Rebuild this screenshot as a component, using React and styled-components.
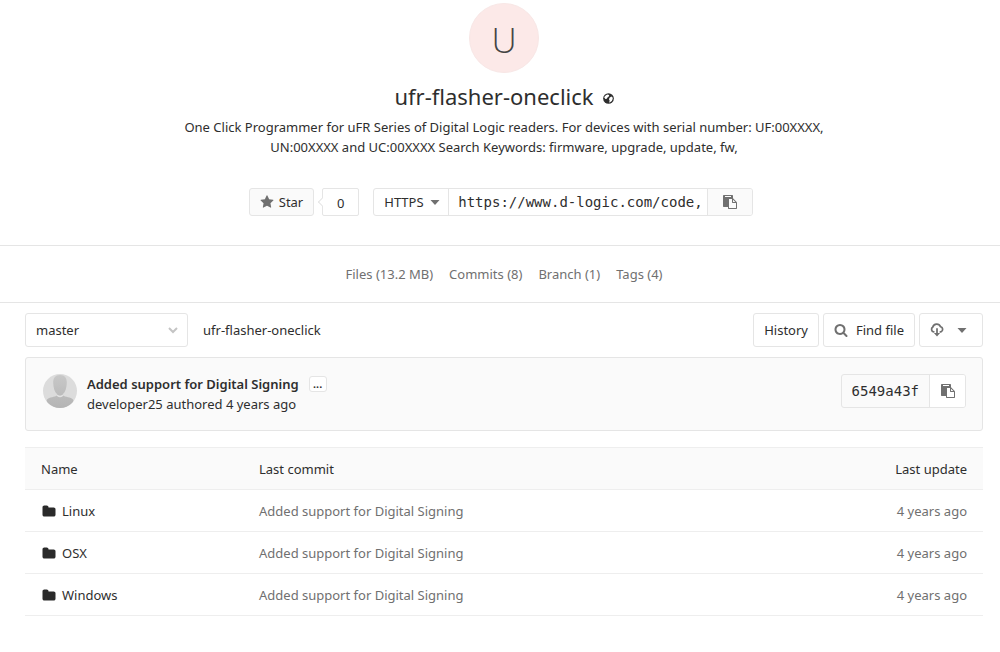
import React from "react";
import styled, { createGlobalStyle } from "styled-components";

const GlobalStyle = createGlobalStyle`
  *, *::before, *::after { box-sizing: border-box; }
  body {
    margin: 0;
    background: #fff;
    color: #2e2e2e;
    font-family: "Noto Sans", "Open Sans", sans-serif;
    font-size: 13px;
    line-height: 20px;
  }
  a { color: inherit; text-decoration: none; }
  button, input, select { font: inherit; color: inherit; margin: 0; }
`;

const MONO = '"DejaVu Sans Mono", monospace';

const Icon = styled.svg`
  display: block;
  flex: none;
  width: ${(p) => p.$size || 14}px;
  height: ${(p) => p.$size || 14}px;
  fill: ${(p) => p.$color || "#707070"};
`;

const Hero = styled.header`
  display: flex;
  flex-direction: column;
  align-items: center;
  padding: 3px 17px 29px 25px;
  border-bottom: 1px solid #e5e5e5;
`;

const Avatar = styled.div`
  width: 70px;
  height: 70px;
  border: 1px solid #f8e7e6;
  border-radius: 50%;
  background: #fce9e8;
  color: #444;
  font-family: "Open Sans", sans-serif;
  font-size: 35px;
  font-weight: 300;
  line-height: 72px;
  text-align: center;
`;

const TitleRow = styled.div`
  display: flex;
  align-items: center;
  gap: 9px;
  margin-top: 7px;

  > svg { margin-top: 4px; }
`;

const Title = styled.h1`
  margin: 0;
  font-size: 22px;
  font-weight: 400;
  line-height: 32px;
`;

const Description = styled.p`
  margin: 5px 0 0;
  max-width: 670px;
  text-align: center;
`;

const Actions = styled.div`
  display: flex;
  align-items: center;
  margin-top: 31px;
  padding-right: 6px;
`;

const Button = styled.button`
  display: flex;
  align-items: center;
  justify-content: center;
  gap: ${(p) => p.$gap || 5}px;
  height: ${(p) => (p.$small ? 28 : 34)}px;
  padding: 0 ${(p) => p.$padEnd || 10}px 0 10px;
  border: 1px solid #e5e5e5;
  border-radius: 3px;
  background: ${(p) => (p.$muted ? "#fafafa" : "#fff")};
  white-space: nowrap;
  cursor: pointer;
`;

const Count = styled.span`
  position: relative;
  width: 37px;
  height: 28px;
  margin: 0 14px 0 8px;
  border: 1px solid #e5e5e5;
  border-radius: 2px;
  line-height: 28px;
  text-align: center;

  &::before {
    content: "";
    position: absolute;
    left: -4px;
    top: 10px;
    width: 6px;
    height: 6px;
    border: solid #e5e5e5;
    border-width: 0 0 1px 1px;
    background: #fff;
    transform: rotate(45deg);
  }
`;

const Clone = styled.div`
  display: flex;
  height: 28px;
  border: 1px solid #e5e5e5;
  border-radius: 3px;
  overflow: hidden;
`;

const SelectBox = styled.div`
  display: grid;
  align-items: center;
  width: ${(p) => p.$width}px;
  height: ${(p) => (p.$bordered ? 34 : 26)}px;
  border: ${(p) => (p.$bordered ? "1px solid #e5e5e5" : "0")};
  border-radius: 3px;

  > * { grid-area: 1 / 1; }
  > svg { justify-self: end; margin-right: 8px; pointer-events: none; }
`;

const Select = styled.select`
  appearance: none;
  width: 100%;
  height: 100%;
  padding: 0 10px;
  border: 0;
  background: transparent;
`;

const UrlInput = styled.input`
  width: 260px;
  padding: 0 7px 0 9px;
  border: solid #e5e5e5;
  border-width: 0 1px;
  outline: 0;
  font-family: ${MONO};
  font-size: 14px;
`;

const CopyButton = styled.button`
  display: flex;
  align-items: center;
  justify-content: center;
  width: ${(p) => p.$width}px;
  padding: 0;
  border: 0;
  background: ${(p) => (p.$muted ? "#fafafa" : "#fff")};
  cursor: pointer;
`;

const Stats = styled.nav`
  display: flex;
  justify-content: center;
  gap: 16px;
  padding: 18px 0 18px 8px;
  border-bottom: 1px solid #e5e5e5;
  color: #707070;
`;

const Main = styled.main`
  padding: 10px 17px 36px 25px;
`;

const Toolbar = styled.div`
  display: flex;
  align-items: center;
  gap: 4px;
`;

const Breadcrumb = styled.a`
  margin: 0 auto 0 11px;
`;

const Commit = styled.section`
  display: flex;
  align-items: center;
  margin-top: 10px;
  height: 74px;
  padding: 0 16px 6px 17px;
  border: 1px solid #e5e5e5;
  border-radius: 3px;
  background: #fafafa;
`;

const CommitText = styled.div`
  margin: 6px auto 0 10px;
`;

const CommitTitle = styled.div`
  display: flex;
  align-items: center;
  gap: 10px;
  font-weight: 600;
`;

const More = styled.button`
  width: 18px;
  height: 16px;
  padding: 0;
  border: 1px solid #e5e5e5;
  border-radius: 3px;
  background: #fff;
  font-size: 11px;
  line-height: 10px;
`;

const Sha = styled.div`
  display: flex;
  height: 34px;
  border: 1px solid #e5e5e5;
  border-radius: 3px;
  overflow: hidden;
`;

const ShaLink = styled.a`
  padding: 0 10px;
  border-right: 1px solid #e5e5e5;
  font-family: ${MONO};
  font-size: 14px;
  line-height: 32px;
`;

const Table = styled.table`
  width: 100%;
  margin-top: 16px;
  border-collapse: collapse;
  table-layout: fixed;
`;

const Row = styled.tr`
  height: 42px;
  border-bottom: 1px solid #eee;
`;

const HeadRow = styled(Row)`
  border-top: 1px solid #eee;
  background: #fafafa;
`;

const Th = styled.th`
  width: ${(p) => p.$width || "auto"};
  padding: 0 16px;
  font-weight: 400;
  text-align: ${(p) => (p.$end ? "right" : "left")};
`;

const Td = styled.td`
  padding: 0 16px;
  color: ${(p) => (p.$muted ? "#707070" : "#2e2e2e")};
  text-align: ${(p) => (p.$end ? "right" : "left")};
`;

const FileLink = styled.a`
  display: flex;
  align-items: center;
  gap: 6px;
  padding-left: 1px;
`;

const StarIcon = () => (
  <Icon viewBox="0 0 1792 1792" aria-hidden="true">
    <path d="M1728 647q0 22-26 48l-363 354 86 500q1 7 1 20 0 21-10.5 35.5t-30.5 14.5q-19 0-40-12l-449-236-449 236q-22 12-40 12-21 0-31.5-14.5t-10.5-35.5q0-6 2-20l86-500-364-354q-25-27-25-48 0-37 56-46l502-73 225-455q19-41 49-41t49 41l225 455 502 73q56 9 56 46z" />
  </Icon>
);

const PasteIcon = () => (
  <Icon viewBox="0 0 1792 1792" aria-hidden="true">
    <path d="M768 1664h896v-640h-416q-40 0-68-28t-28-68v-416h-384v1152zm256-1440v-64q0-13-9.5-22.5t-22.5-9.5h-704q-13 0-22.5 9.5t-9.5 22.5v64q0 13 9.5 22.5t22.5 9.5h704q13 0 22.5-9.5t9.5-22.5zm256 672h299l-299-299v299zm512 128v672q0 40-28 68t-68 28h-960q-40 0-68-28t-28-68v-160h-544q-40 0-68-28t-28-68v-1344q0-40 28-68t68-28h1088q40 0 68 28t28 68v328q21 13 36 28l408 408q28 28 48 76t20 88z" />
  </Icon>
);

const SearchIcon = () => (
  <Icon viewBox="0 0 1792 1792" aria-hidden="true">
    <path d="M1216 832q0-185-131.5-316.5t-316.5-131.5-316.5 131.5-131.5 316.5 131.5 316.5 316.5 131.5 316.5-131.5 131.5-316.5zm512 832q0 52-38 90t-90 38q-54 0-90-38l-343-342q-179 124-399 124-143 0-273.5-55.5t-225-150-150-225-55.5-273.5 55.5-273.5 150-225 225-150 273.5-55.5 273.5 55.5 225 150 150 225 55.5 273.5q0 220-124 399l343 343q37 37 37 90z" />
  </Icon>
);

const FolderIcon = () => (
  <Icon viewBox="0 -64 1792 1792" $color="#2a2a2a" aria-hidden="true">
    <path d="M1728 608v704q0 92-66 158t-158 66h-1216q-92 0-158-66t-66-158v-960q0-92 66-158t158-66h320q92 0 158 66t66 158v32h672q92 0 158 66t66 158z" />
  </Icon>
);

const GlobeIcon = () => (
  <Icon viewBox="0 0 16 16" $size={11} $color="#2e2e2e" role="img" aria-label="Public">
    <circle cx="8" cy="8" r="7.800" />
    <path
      fill="#fff"
      d="M1.800 6.500C2.500 4.300 4.200 2.600 6.500 2l2.500.8-.3 2L6.500 6.500 5.500 8.500 3.500 8.800zM9.500 7l2.500-2 1.800 1.200.4 2.300-1.400 3-2.500 2-1.500.3.900-2.600-1-2z"
    />
  </Icon>
);

const CloudDownloadIcon = () => (
  <Icon viewBox="0 0 16 16" aria-hidden="true">
    <path
      d="M4.300 10.200a3 3 0 0 1-1.100-5.500 4.700 4.700 0 0 1 8.800-.6 3.200 3.200 0 0 1 .4 6.100h-.6"
      fill="none"
      stroke="#707070"
      strokeWidth="2"
      strokeLinecap="round"
    />
    <path d="M7 6h2v5.500h2.500L8 15.500 4.500 11.500H7z" />
  </Icon>
);

const Caret = () => (
  <Icon viewBox="0 0 10 10" $size={10} aria-hidden="true">
    <path d="M.5 3h9L5 8z" />
  </Icon>
);

const Chevron = () => (
  <Icon viewBox="0 0 12 12" $size={12} aria-hidden="true">
    <path d="M2 4l4 4 4-4" fill="none" stroke="#c4c4c4" strokeWidth="2" />
  </Icon>
);

const UserPicture = () => (
  <Icon viewBox="0 0 34 34" $size={34} role="img" aria-label="developer25">
    <defs>
      <clipPath id="round"><circle cx="17" cy="17" r="17" /></clipPath>
      <linearGradient id="body" x1="0" y1="0" x2="0" y2="1">
        <stop offset="0" stopColor="#c8c8c8" />
        <stop offset="1" stopColor="#b4b4b4" />
      </linearGradient>
    </defs>
    <g clipPath="url(#round)">
      <rect width="34" height="34" fill="#dcdcdc" />
      <path
        fill="url(#body)"
        d="M17 1c4.800 0 7 3 6.800 8-.2 5-1.500 9-3.800 11v1.500c2 1.500 8 1.500 10 4 1 1.500 1 5 1 8.500H3c0-3.500 0-7 1-8.500 2-2.500 8-2.500 10-4V20c-2.300-2-3.600-6-3.800-11C10 4 12.200 1 17 1z"
      />
      <path fill="#e2e2e2" d="M14 20.500c2 1.500 4 1.500 6 0v1.500q-3 2.500-6 0z" />
    </g>
  </Icon>
);

const stats = ["Files (13.2 MB)", "Commits (8)", "Branch (1)", "Tags (4)"];
const folders = ["Linux", "OSX", "Windows"];

export default function App() {
  return (
    <>
      <GlobalStyle />
      <Hero>
        <Avatar>U</Avatar>
        <TitleRow>
          <Title>ufr-flasher-oneclick</Title>
          <GlobeIcon />
        </TitleRow>
        <Description>
          One Click Programmer for uFR Series of Digital Logic readers. For devices with serial number: UF:00XXXX,
          UN:00XXXX and UC:00XXXX Search Keywords: firmware, upgrade, update, fw,
        </Description>
        <Actions>
          <Button $small $muted><StarIcon />Star</Button>
          <Count>0</Count>
          <Clone>
            <SelectBox $width={74}>
              <Select aria-label="Clone protocol" defaultValue="HTTPS">
                <option>HTTPS</option>
              </Select>
              <Caret />
            </SelectBox>
            <UrlInput aria-label="Repository URL" readOnly value="https://www.d-logic.com/code," />
            <CopyButton $width={44} $muted aria-label="Copy URL"><PasteIcon /></CopyButton>
          </Clone>
        </Actions>
      </Hero>
      <Stats>
        {stats.map((s) => <a key={s} href="#">{s}</a>)}
      </Stats>
      <Main>
        <Toolbar>
          <SelectBox $width={163} $bordered>
            <Select aria-label="Branch" defaultValue="master">
              <option>master</option>
            </Select>
            <Chevron />
          </SelectBox>
          <Breadcrumb href="#">ufr-flasher-oneclick</Breadcrumb>
          <Button>History</Button>
          <Button $gap={8}><SearchIcon />Find file</Button>
          <Button $gap={13} $padEnd={15} aria-label="Download"><CloudDownloadIcon /><Caret /></Button>
        </Toolbar>
        <Commit>
          <UserPicture />
          <CommitText>
            <CommitTitle>
              <a href="#">Added support for Digital Signing</a>
              <More aria-label="Show full message">...</More>
            </CommitTitle>
            <div>developer25 authored 4 years ago</div>
          </CommitText>
          <Sha>
            <ShaLink href="#">6549a43f</ShaLink>
            <CopyButton $width={35} aria-label="Copy commit SHA"><PasteIcon /></CopyButton>
          </Sha>
        </Commit>
        <Table>
          <thead>
            <HeadRow>
              <Th $width="218px">Name</Th>
              <Th>Last commit</Th>
              <Th $width="140px" $end>Last update</Th>
            </HeadRow>
          </thead>
          <tbody>
            {folders.map((name) => (
              <Row key={name}>
                <Td><FileLink href="#"><FolderIcon />{name}</FileLink></Td>
                <Td $muted><a href="#">Added support for Digital Signing</a></Td>
                <Td $muted $end>4 years ago</Td>
              </Row>
            ))}
          </tbody>
        </Table>
      </Main>
    </>
  );
}
